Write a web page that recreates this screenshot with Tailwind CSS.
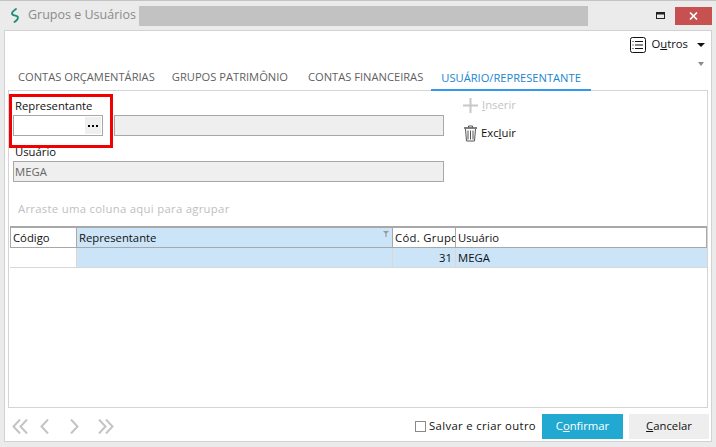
<!DOCTYPE html>
<html>
<head>
<meta charset="utf-8">
<script src="https://cdn.jsdelivr.net/npm/@tailwindcss/browser@4"></script>
</head>
<body class="m-0">
<div class="relative w-[716px] h-[447px] overflow-hidden bg-[#ebebeb] border-t border-[#c4c4c4] flex flex-col font-['Open_Sans',sans-serif] text-[11.3px] text-[#111]">
  <!-- title bar -->
  <div class="h-[29px] shrink-0 flex items-center">
    <svg class="ml-[10px] w-[10px] h-[15px] shrink-0" viewBox="0 0 10 15" fill="none" stroke="#1f8f73" stroke-width="1.8" stroke-linecap="round"><path d="M6 1 C3 3 1 5 2.5 6.5 C4 8 8 7.5 8 9.5 C8 11 6 13 4.5 14"/></svg>
    <span class="ml-[8px] text-[12.5px] text-[#8a8a8a] whitespace-nowrap">Grupos e Usuários</span>
    <div class="ml-[3px] w-[449px] h-[20px] shrink-0 bg-[#c2c2c2]"></div>
    <svg class="ml-[68px] w-[10px] h-[8px] shrink-0" viewBox="0 0 10 8" fill="none" stroke="#222"><rect x="0.5" y="0.5" width="8" height="6" stroke-width="1"/><path d="M0 1.5H9" stroke-width="2"/></svg>
    <div class="ml-[9px] w-[37px] h-[18px] shrink-0 bg-[#c75050] flex items-center justify-center">
      <svg class="w-[9px] h-[8px]" viewBox="0 0 9 8" stroke="#fff" stroke-width="1.7"><path d="M1 0.5L8 7.5M8 0.5L1 7.5"/></svg>
    </div>
  </div>
  <!-- content -->
  <div class="ml-[4px] mr-[4px] h-[412px] bg-white border border-[#d2d2d2] flex flex-col">
    <!-- toolbar -->
    <div class="h-[26px] shrink-0 flex items-center justify-end pr-[6px] pt-[1px]">
      <svg class="w-[16px] h-[16px] mr-[5px]" viewBox="0 0 16 16" fill="none" stroke="#111"><rect x="0.5" y="0.5" width="15" height="15" rx="2"/><path d="M5 4.5H13M5 8H13M5 11.5H13"/><path d="M2.5 4.5H3.5M2.5 8H3.5M2.5 11.5H3.5"/></svg>
      <span class="text-[#111]">O<span class="underline">u</span>tros</span>
      <span class="ml-[9px] w-0 h-0 border-l-[4px] border-r-[4px] border-t-[4px] border-l-transparent border-r-transparent border-t-[#111]"></span>
    </div>
    <!-- tabs -->
    <div class="relative h-[34px] shrink-0 flex items-end ml-[3px] mr-[3px] border-b border-[#d4d4d4] text-[11.15px]">
      <div class="h-[23px] pt-[2px] pl-[10px] pr-[8px] text-[#5f5f5f] whitespace-nowrap leading-[16px]">CONTAS ORÇAMENTÁRIAS</div>
      <div class="h-[23px] pt-[2px] pl-[9px] pr-[11px] text-[#5f5f5f] whitespace-nowrap leading-[16px]">GRUPOS PATRIMÔNIO</div>
      <div class="h-[23px] pt-[2px] pl-[9px] pr-[8px] text-[#5f5f5f] whitespace-nowrap leading-[16px]">CONTAS FINANCEIRAS</div>
      <div class="h-[23px] pt-[2px] px-[10px] text-[#2185d0] whitespace-nowrap leading-[16px] border-b-2 border-[#3399ee] -mb-px">USUÁRIO/REPRESENTANTE</div>
      <span class="absolute right-[4px] top-[5px] w-0 h-0 border-l-[3.5px] border-r-[3.5px] border-t-[4px] border-l-transparent border-r-transparent border-t-[#8a8a8a]"></span>
    </div>
    <!-- tab body -->
    <div class="ml-[3px] mr-[3px] h-[317px] border-x border-b border-[#d4d4d4] flex flex-col shrink-0">
      <div class="h-[135px] shrink-0 flex pl-[4px] relative">
        <div class="w-[431px] shrink-0 flex flex-col">
          <div class="pl-[2px] pt-[7px] h-[24px] leading-[16px]">Representante</div>
          <div class="flex gap-[11px]">
            <div class="w-[90px] h-[21px] border border-[#a8a8a8] bg-white flex justify-end items-center pr-px">
              <div class="w-[16px] h-[17px] bg-[#efefef] flex items-center justify-center gap-[2px]">
                <i class="w-[2px] h-[2px] bg-black"></i><i class="w-[2px] h-[2px] bg-black"></i><i class="w-[2px] h-[2px] bg-black"></i>
              </div>
            </div>
            <div class="w-[330px] h-[21px] border border-[#a8a8a8] bg-[#efefef]"></div>
          </div>
          <div class="pl-[2px] mt-[8px] h-[17px] leading-[16px]">Usuário</div>
          <div class="w-[431px] h-[21px] border border-[#a8a8a8] bg-[#efefef] pl-[1px] leading-[19px] text-[#666]">MEGA</div>
          <div class="pl-[5px] mt-[19px] text-[#c0c0c0] leading-[16px] tracking-[0.3px]">Arraste uma coluna aqui para agrupar</div>
        </div>
        <div class="ml-[18px] flex flex-col">
          <div class="mt-[4px] h-[20px] flex items-center">
            <svg class="w-[17px] h-[17px]" viewBox="0 0 17 17" stroke="#c8c8c8" stroke-width="2"><path d="M8.5 1V16M1 8.5H16"/></svg>
            <span class="ml-[3px] text-[#c4c4c4]"><span class="underline">I</span>nserir</span>
          </div>
          <div class="mt-[8px] h-[20px] flex items-center">
            <svg class="w-[15px] h-[17px] ml-px" viewBox="0 0 15 17" fill="none" stroke="#555"><path d="M1 3H14" stroke-width="1.5"/><path d="M5.5 2.5V1H9.5V2.5"/><path d="M2.5 4L3.5 16H11.5L12.5 4"/><path d="M5 5.5V14.5M7.5 5.5V14.5M10 5.5V14.5"/></svg>
            <span class="ml-[3px]">Exc<span class="underline">l</span>uir</span>
          </div>
        </div>
      </div>
      <!-- grid -->
      <div class="ml-[1px] w-[697px] border-t-2 border-[#a8a8a8]">
        <div class="h-[20px] grid grid-cols-[66px_316px_63px_1fr] border-b border-[#a8a8a8] border-x leading-[19px]">
          <div class="pl-[2px] border-r border-[#a8a8a8]">Código</div>
          <div class="relative pl-[2px] bg-[#cce4f7] border-r border-[#a8a8a8]">Representante
            <svg class="absolute right-[3px] top-[3px] w-[6px] h-[6px]" viewBox="0 0 6 6" fill="#999"><path d="M0 0H6L3.6 2.6V6H2.4V2.6Z"/></svg>
          </div>
          <div class="pl-[2px] border-r border-[#a8a8a8] overflow-hidden whitespace-nowrap tracking-[0.3px]">Cód. Grupo</div>
          <div class="pl-[2px]">Usuário</div>
        </div>
        <div class="h-[20px] grid grid-cols-[67px_316px_63px_1fr] border-b border-[#d8d8d8] leading-[19px]">
          <div class="border-r border-[#d8d8d8]"></div>
          <div class="bg-[#cce4f7] border-r border-[#d8d8d8]"></div>
          <div class="bg-[#cce4f7] border-r border-[#d8d8d8] text-right pr-[3px]">31</div>
          <div class="bg-[#cce4f7] pl-[2px]">MEGA</div>
        </div>
      </div>
    </div>
    <!-- footer -->
    <div class="flex-1 flex items-center pl-[7px] pr-[2px] pt-[3px]">
      <svg class="w-[16px] h-[15px]" viewBox="0 0 16 15" fill="none" stroke="#c4c4c4" stroke-width="2"><path d="M8 0.5L1.5 7.5L8 14.5M15 0.5L8.5 7.5L15 14.5"/></svg>
      <svg class="ml-[12px] w-[9px] h-[15px]" viewBox="0 0 9 15" fill="none" stroke="#c4c4c4" stroke-width="2"><path d="M8 0.5L1.5 7.5L8 14.5"/></svg>
      <svg class="ml-[21px] w-[9px] h-[15px]" viewBox="0 0 9 15" fill="none" stroke="#c4c4c4" stroke-width="2"><path d="M1 0.5L7.5 7.5L1 14.5"/></svg>
      <svg class="ml-[19px] w-[16px] h-[15px]" viewBox="0 0 16 15" fill="none" stroke="#c4c4c4" stroke-width="2"><path d="M1 0.5L7.5 7.5L1 14.5M8 0.5L14.5 7.5L8 14.5"/></svg>
      <div class="ml-auto w-[11px] h-[11px] border border-[#8a8a8a] bg-white"></div>
      <span class="ml-[3px] tracking-[0.35px]">Salvar e criar outro</span>
      <div class="ml-[6px] w-[81px] h-[25px] bg-[#22a9d2] text-white flex items-center justify-center">C<span class="underline">o</span>nfirmar</div>
      <div class="ml-[6px] w-[80px] h-[25px] bg-[#eeeeee] flex items-center justify-center"><span class="underline">C</span>ancelar</div>
    </div>
  </div>
  <!-- red highlight -->
  <div class="absolute left-[9px] top-[93px] w-[104px] h-[54px] border-[3px] border-[#f00000]"></div>
</div>
</body>
</html>
